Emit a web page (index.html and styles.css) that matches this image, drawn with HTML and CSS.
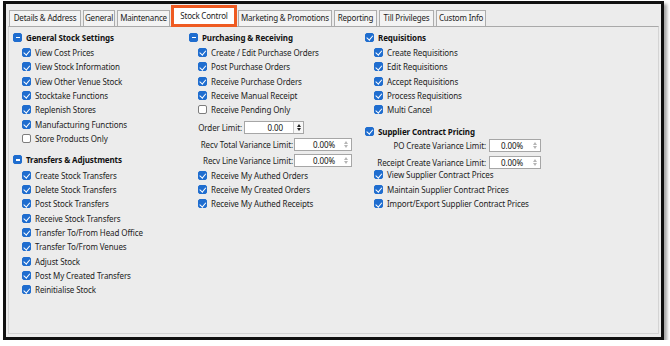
FILE: index.html
```html
<!DOCTYPE html>
<html lang="en">
  <head>
    <meta charset="UTF-8" />
    <title>Stock Control</title>
    <link rel="stylesheet" href="styles.css">
  </head>
  <body>
    <div class="window">
      <div class="tabs">
        <div class="tab t-details">Details &amp; Address</div>
        <div class="tab t-general">General</div>
        <div class="tab t-maint">Maintenance</div>
        <div class="tab active">Stock Control</div>
        <div class="tab t-marketing">Marketing &amp; Promotions</div>
        <div class="tab t-reporting">Reporting</div>
        <div class="tab t-till">Till Privileges</div>
        <div class="tab t-custom">Custom Info</div>
      </div>
      <div class="panel">
        <!-- column 1 -->
        <div class="col">
          <div class="head"><span class="box minus"></span>General Stock Settings</div>
          <ul class="list">
            <li class="item"><span class="box on"></span>View Cost Prices</li>
            <li class="item"><span class="box on"></span>View Stock Information</li>
            <li class="item"><span class="box on"></span>View Other Venue Stock</li>
            <li class="item"><span class="box on"></span>Stocktake Functions</li>
            <li class="item"><span class="box on"></span>Replenish Stores</li>
            <li class="item"><span class="box on"></span>Manufacturing Functions</li>
            <li class="item"><span class="box"></span>Store Products Only</li>
          </ul>
          <div class="head next"><span class="box minus"></span>Transfers &amp; Adjustments</div>
          <ul class="list">
            <li class="item"><span class="box on"></span>Create Stock Transfers</li>
            <li class="item"><span class="box on"></span>Delete Stock Transfers</li>
            <li class="item"><span class="box on"></span>Post Stock Transfers</li>
            <li class="item"><span class="box on"></span>Receive Stock Transfers</li>
            <li class="item"><span class="box on"></span>Transfer To/From Head Office</li>
            <li class="item"><span class="box on"></span>Transfer To/From Venues</li>
            <li class="item"><span class="box on"></span>Adjust Stock</li>
            <li class="item"><span class="box on"></span>Post My Created Transfers</li>
            <li class="item"><span class="box on"></span>Reinitialise Stock</li>
          </ul>
        </div>

        <!-- column 2 -->
        <div class="col">
          <div class="head"><span class="box minus"></span>Purchasing &amp; Receiving</div>
          <ul class="list">
            <li class="item"><span class="box on"></span>Create / Edit Purchase Orders</li>
            <li class="item"><span class="box on"></span>Post Purchase Orders</li>
            <li class="item"><span class="box on"></span>Receive Purchase Orders</li>
            <li class="item"><span class="box on"></span>Receive Manual Receipt</li>
            <li class="item"><span class="box"></span>Receive Pending Only</li>
          </ul>
          <div class="field f-order">
            <label class="w-order">Order Limit:</label>
            <div class="spin s-order">
              <span class="val">0.00</span>
              <span class="btns dark"><i class="up"></i><i class="down"></i></span>
            </div>
          </div>
          <div class="field f-total">
            <label class="w-recv">Recv Total Variance Limit:</label>
            <div class="spin s-recv">
              <span class="val">0.00%</span>
              <span class="btns"><i class="up"></i><i class="down"></i></span>
            </div>
          </div>
          <div class="field f-line">
            <label class="w-recv">Recv Line Variance Limit:</label>
            <div class="spin s-recv">
              <span class="val">0.00%</span>
              <span class="btns"><i class="up"></i><i class="down"></i></span>
            </div>
          </div>
          <ul class="list">
            <li class="item"><span class="box on"></span>Receive My Authed Orders</li>
            <li class="item"><span class="box on"></span>Receive My Created Orders</li>
            <li class="item"><span class="box on"></span>Receive My Authed Receipts</li>
          </ul>
        </div>

        <!-- column 3 -->
        <div class="col">
          <div class="head"><span class="box on"></span>Requisitions</div>
          <ul class="list">
            <li class="item"><span class="box on"></span>Create Requisitions</li>
            <li class="item"><span class="box on"></span>Edit Requisitions</li>
            <li class="item"><span class="box on"></span>Accept Requisitions</li>
            <li class="item"><span class="box on"></span>Process Requisitions</li>
            <li class="item"><span class="box on"></span>Multi Cancel</li>
          </ul>
          <div class="head next"><span class="box on"></span>Supplier Contract Pricing</div>
          <div class="field f-po">
            <label class="w-supp">PO Create Variance Limit:</label>
            <div class="spin s-supp">
              <span class="val">0.00%</span>
              <span class="btns"><i class="up"></i><i class="down"></i></span>
            </div>
          </div>
          <div class="field f-receipt">
            <label class="w-supp">Receipt Create Variance Limit:</label>
            <div class="spin s-supp">
              <span class="val">0.00%</span>
              <span class="btns"><i class="up"></i><i class="down"></i></span>
            </div>
          </div>
          <ul class="list tight">
            <li class="item"><span class="box on"></span>View Supplier Contract Prices</li>
            <li class="item"><span class="box on"></span>Maintain Supplier Contract Prices</li>
            <li class="item"><span class="box on"></span>Import/Export Supplier Contract Prices</li>
          </ul>
        </div>
      </div>
    </div>
  </body>
</html>
```

FILE: styles.css
```css
* {
  box-sizing: border-box;
}

body {
  margin: 0;
  background: #fff;
  font-family: "Noto Sans", "Open Sans", sans-serif;
  font-size: 8px;
  letter-spacing: -0.1px;
  color: #1d1d1d;
}

.window {
  display: flex;
  flex-direction: column;
  width: 661px;
  height: 339px;
  margin: 1px 0 0 3px;
  padding: 6px 2px 3px 2px;
  background: #ececec;
  border: 3px solid #111;
  box-shadow: 3px 3px 3px rgba(0, 0, 0, 0.35);
}

/* tabs */
.tabs {
  display: flex;
  align-items: flex-end;
  gap: 2px;
  height: 16px;
  padding-left: 1px;
  position: relative;
  z-index: 1;
}

.tab {
  flex: none;
  height: 16px;
  padding: 0;
  line-height: 13px;
  letter-spacing: -0.2px;
  text-align: center;
  white-space: nowrap;
  background: #f3f3f3;
  border: 1px solid #adadad;
  border-bottom: 0;
}

.t-details { width: 72px; }
.t-general { width: 32px; }
.t-maint { width: 53px; }
.t-marketing { width: 94px; }
.t-reporting { width: 43px; }
.t-till { width: 55px; }
.t-custom { width: 50px; }

.tab.active {
  width: 66px;
  height: 22px;
  margin: 0 -1px -1px;
  line-height: 15px;
  background: #fff;
  border: 3px solid #ef5b22;
}

/* panel */
.panel {
  display: grid;
  grid-template-columns: 176px 176px 176px;
  align-content: start;
  height: 308px;
  padding: 3px 0 0 4px;
  background: #ececec;
  border: 1px solid #d4d4d4;
  border-top-color: #a9a9a9;
}

.head {
  display: flex;
  align-items: center;
  gap: 4px;
  height: 14.33px;
  font-weight: 700;
  color: #111;
}

.head.next {
  margin-top: 7px;
}

.list {
  margin: 1px 0 0;
  padding: 0;
  list-style: none;
}

.list.tight {
  margin-top: -1px;
}

.item {
  display: flex;
  align-items: center;
  gap: 4px;
  height: 14.33px;
  padding-left: 9px;
  white-space: nowrap;
}

/* checkboxes */
.box {
  position: relative;
  flex: none;
  width: 9px;
  height: 9px;
  background: #fff;
  border: 1px solid #7d7d7d;
  border-radius: 2px;
}

.box.on,
.box.minus {
  background: #1f6dcf;
  border-color: #1f6dcf;
}

.box.on::after {
  content: "";
  position: absolute;
  left: 2px;
  top: 0.5px;
  width: 2.5px;
  height: 4.5px;
  border: solid #fff;
  border-width: 0 1.2px 1.2px 0;
  transform: rotate(40deg);
}

.box.minus::after {
  content: "";
  position: absolute;
  left: 1.5px;
  top: 3px;
  width: 4px;
  height: 1.4px;
  background: #fff;
}

/* number fields */
.field {
  display: flex;
  align-items: center;
  height: 13px;
  white-space: nowrap;
}

.f-order,
.f-total {
  margin-top: 4px;
}

.f-line {
  margin-top: 3px;
}

.f-po {
  margin-top: 0.5px;
}

.f-receipt {
  margin-top: 4px;
}

.field label {
  flex: none;
  text-align: right;
}

.w-order {
  width: 53px;
  margin-right: 2px;
}

.w-recv {
  width: 104px;
  margin-right: 1px;
}

.w-supp {
  width: 121px;
  margin-right: 3px;
}

.spin {
  display: flex;
  height: 13px;
  background: #fff;
  border: 1px solid #a6a6a6;
}

.spin .val {
  flex: 1;
  line-height: 11px;
  text-align: right;
  color: #111;
}

.s-order {
  width: 60px;
}

.s-order .val {
  padding-right: 10px;
}

.s-recv {
  width: 58px;
}

.s-recv .val {
  padding-right: 6px;
}

.s-supp {
  width: 57px;
}

.s-supp .val {
  padding-right: 7px;
}

.btns {
  display: flex;
  flex-direction: column;
  align-items: center;
  justify-content: center;
  gap: 1px;
  width: 10px;
  background: #fff;
}

.btns.dark {
  border-left: 1px solid #c9c9c9;
  background: #f7f7f7;
}

.btns i {
  width: 0;
  height: 0;
  border-left: 2.5px solid transparent;
  border-right: 2.5px solid transparent;
}

.btns .up {
  border-bottom: 3px solid #b5b5b5;
}

.btns .down {
  border-top: 3px solid #b5b5b5;
}

.btns.dark .up {
  border-bottom-color: #222;
}

.btns.dark .down {
  border-top-color: #222;
}
```
